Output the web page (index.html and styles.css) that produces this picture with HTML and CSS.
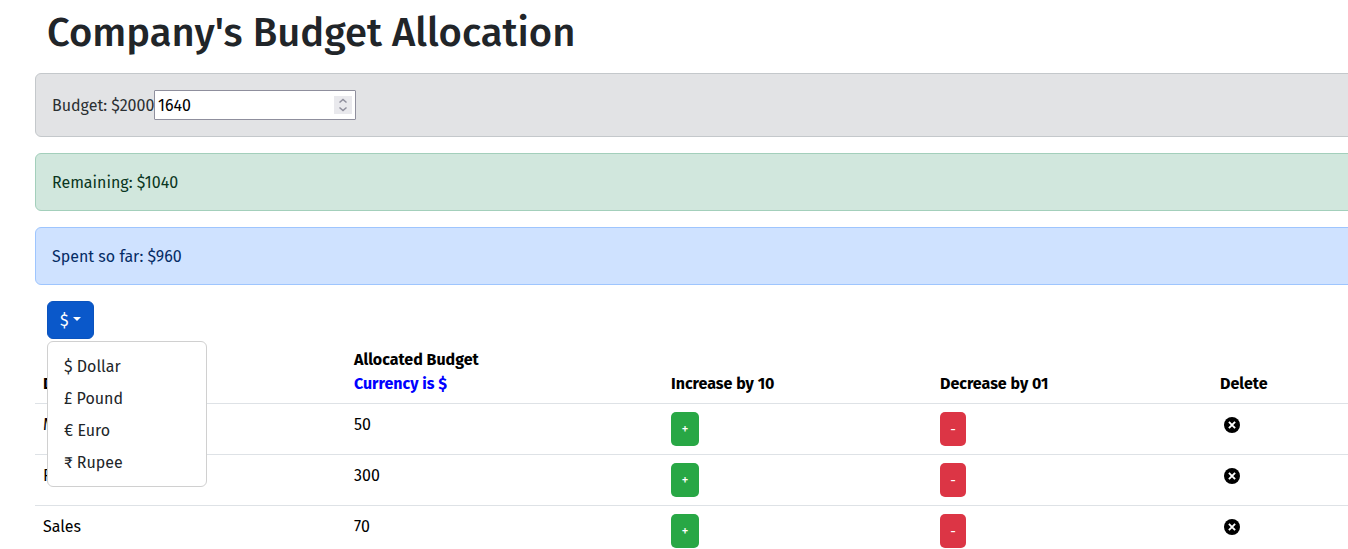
FILE: index.html
```html
<!DOCTYPE html>
<html lang="en">
<head>
<meta charset="utf-8">
<title>Company's Budget Allocation</title>
<link rel="stylesheet" href="styles.css">
</head>
<body>
<svg class="sprite" aria-hidden="true">
  <symbol id="times-circle" viewBox="0 0 16 16"><circle cx="8" cy="8" r="8"/><path d="M4.9 4.9l6.2 6.2M11.1 4.9l-6.2 6.2" stroke="#fff" stroke-width="1.9"/></symbol>
</svg>
<main class="container">
  <h1 class="title">Company's Budget Allocation</h1>
  <section class="alert alert-secondary">
    <span class="budget-label">Budget: $2000</span>
    <label class="number-field"><span class="value">1640</span>
      <svg class="spinner" viewBox="0 0 18 18"><path d="M5.5 6.5 9 3.5l3.5 3M5.5 11.5l3.5 3 3.5-3"/></svg>
    </label>
  </section>
  <section class="alert alert-success">Remaining: $1040</section>
  <section class="alert alert-primary">Spent so far: $960</section>
  <div class="dropdown">
    <button class="toggle" type="button">$<span class="caret"></span></button>
    <div class="menu">
      <a class="item">$ Dollar</a>
      <a class="item">£ Pound</a>
      <a class="item">€ Euro</a>
      <a class="item">₹ Rupee</a>
    </div>
  </div>
  <div class="table">
    <div class="row head">
      <div>Department</div>
      <div>Allocated Budget<br><span class="currency">Currency is $</span></div>
      <div>Increase by 10</div>
      <div>Decrease by 01</div>
      <div>Delete</div>
    </div>
    <div class="row">
      <div>Marketing</div><div>50</div>
      <div><button class="step plus">+</button></div>
      <div><button class="step minus">-</button></div>
      <div><svg class="delete"><use href="#times-circle"/></svg></div>
    </div>
    <div class="row">
      <div>Finance</div><div>300</div>
      <div><button class="step plus">+</button></div>
      <div><button class="step minus">-</button></div>
      <div><svg class="delete"><use href="#times-circle"/></svg></div>
    </div>
    <div class="row">
      <div>Sales</div><div>70</div>
      <div><button class="step plus">+</button></div>
      <div><button class="step minus">-</button></div>
      <div><svg class="delete"><use href="#times-circle"/></svg></div>
    </div>
  </div>
</main>
</body>
</html>
```
FILE: styles.css
```css
* { box-sizing: border-box; }
html, body { height: 100%; overflow: hidden; }
body {
  margin: 0;
  background: #fff;
  color: #212529;
  font: 400 16px/24px "Fira Sans", "Noto Sans", sans-serif;
}
.sprite { display: none; }
.container { width: 1380px; padding: 9px 0 0 35px; }
.title {
  margin: 0 0 16px 12px;
  font-size: 40px;
  font-weight: 500;
  line-height: 48px;
  white-space: nowrap;
}
.alert {
  display: flex;
  align-items: center;
  height: 58px;
  margin-bottom: 16px;
  padding: 2px 16px 0;
  border: 1px solid;
  border-radius: 6px;
}
.alert-secondary { height: 64px; background: #e2e3e5; border-color: #c4c8cb; color: #2b2f32; }
.alert-success { background: #d1e7dd; border-color: #a3cfbb; color: #0a3622; }
.alert-primary { background: #cfe2ff; border-color: #9ec5fe; color: #052c65; }
.budget-label { width: 102px; white-space: nowrap; }
.number-field {
  display: flex;
  align-items: center;
  justify-content: space-between;
  width: 202px;
  height: 30px;
  margin-top: -2px;
  padding: 0 3px;
  border: 1px solid #8f8f9d;
  border-radius: 1px;
  background: #fff;
  color: #000;
}
.value { padding-top: 2px; }
.spinner { width: 18px; height: 18px; background: #e9e9ed; fill: none; stroke: #8f8f9d; stroke-width: 1.5; }
.dropdown { position: relative; width: 47px; height: 38px; margin-left: 12px; }
.toggle {
  display: flex;
  align-items: center;
  width: 47px;
  height: 38px;
  padding: 2px 12px 0;
  border: 1px solid #0a53be;
  border-radius: 6px;
  background: #0a58ca;
  color: #fff;
  font: inherit;
}
.caret { margin: -5px 0 0 4px; border: 4.8px solid transparent; border-top-color: #fff; border-bottom: 0; }
.menu {
  position: absolute;
  top: 40px;
  left: 0;
  z-index: 1;
  width: 160px;
  height: 146px;
  padding: 8px 0;
  border: 1px solid #d0d0d0;
  border-radius: 6px;
  background: #fff;
}
.item { display: block; padding: 5px 16px 3px; }
.table { color: #000; }
.row {
  display: grid;
  grid-template-columns: 311px 317px 269px 280px 1fr;
  height: 51px;
  border-bottom: 1px solid #dee2e6;
}
.row > div { padding: 9px 8px 7px; }
.head { height: 65px; align-items: end; font-weight: 700; }
.currency { color: #00f; }
.step {
  display: block;
  height: 34px;
  margin-top: -1px;
  padding: 2px 0 0;
  border: 0;
  border-radius: 5px;
  color: #fff;
  font: 400 14px/16px "Fira Sans", "Noto Sans", sans-serif;
}
.plus { width: 28px; background: #28a745; }
.minus { width: 26px; background: #dc3545; }
.delete { display: block; width: 16px; height: 16px; margin: 4px 0 0 4px; overflow: visible; }
```
